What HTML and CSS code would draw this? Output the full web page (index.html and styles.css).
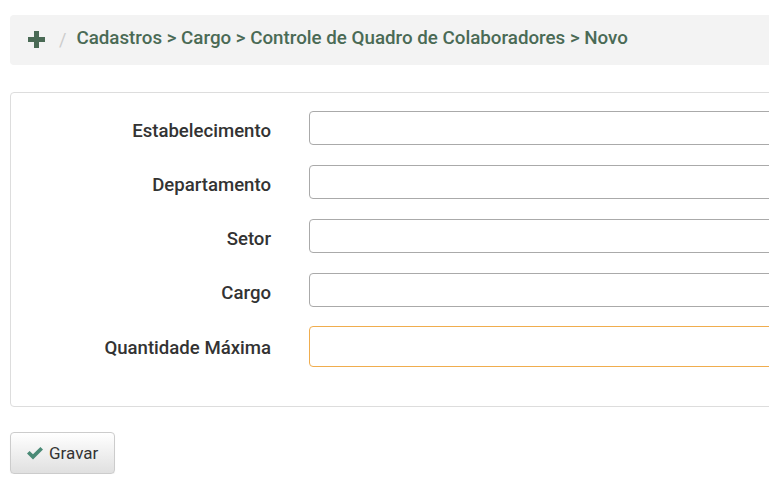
FILE: index.html
```html
<!DOCTYPE html>
<html lang="pt">
<head>
<meta charset="utf-8">
<link rel="stylesheet" href="styles.css">
</head>
<body>
<div class="page">
  <div class="breadcrumb">
    <svg class="plus" width="17" height="17" viewBox="0 0 17 17"><path d="M6 0h5v6h6v5h-6v6H6v-6H0V6h6z" fill="#4a6a55"/></svg>
    <span class="sep">/</span>
    <span class="crumb">Cadastros &gt; Cargo &gt; Controle de Quadro de Colaboradores &gt; Novo</span>
  </div>
  <div class="panel">
    <div class="row"><label class="lbl">Estabelecimento</label><div class="input"></div></div>
    <div class="row"><label class="lbl">Departamento</label><div class="input"></div></div>
    <div class="row"><label class="lbl">Setor</label><div class="input"></div></div>
    <div class="row"><label class="lbl">Cargo</label><div class="input"></div></div>
    <div class="row row-focus"><label class="lbl">Quantidade Máxima</label><div class="input focus"></div></div>
  </div>
  <button class="btn">
    <svg width="18" height="14" viewBox="0 0 18 14"><path d="M1 7.5l2.6-2.6 3.4 3.4L14.4 1 17 3.6 7 13.6z" fill="#4a8a76"/></svg>
    Gravar
  </button>
</div>
</body>
</html>
```
FILE: styles.css
```css
html, body { margin: 0; padding: 0; background: #fff; overflow: hidden; }
body { font-family: Roboto, "Noto Sans", sans-serif; color: #333; }
.page { width: 800px; padding: 15px 0 0 10px; }
.breadcrumb {
  height: 50px; background: #f3f3f3; border-radius: 4px;
  display: flex; align-items: center; padding-left: 18px; box-sizing: border-box;
}
.plus { margin-top: -2px; }
.sep { color: #ccc; margin: -2px 10px 0 14px; font-size: 18px; }
.crumb { color: #4a6a55; font-weight: 500; font-size: 18.75px; margin-top: -4px; }
.panel {
  margin-top: 27px; border: 1px solid #ddd; border-radius: 4px;
  padding: 18px 0 38px 0; height: 315px; box-sizing: border-box;
  display: flex; flex-direction: column; gap: 20px;
}
.row { display: flex; align-items: center; }
.lbl { width: 260px; text-align: right; font-weight: 500; font-size: 18.6px; color: #333; padding-top: 5px; }
.row-focus .lbl { padding-top: 1px; }
.input {
  margin-left: 38px; flex: 1; height: 34px; box-sizing: border-box;
  border: 1px solid #aaa; border-radius: 4px; background: #fff;
}
.input.focus { height: 41px; border-color: #f0ad4e; margin-top: -1px; }
.btn {
  margin-top: 25px; width: 105px; height: 42px; display: flex; align-items: center; gap: 5px;
  padding: 0 0 0 15px; font-family: Roboto, sans-serif; font-size: 17px; color: #333;
  background: linear-gradient(#fff, #e0e0e0); border: 1px solid #ccc; border-radius: 4px;
  box-shadow: 0 1px 1px rgba(0,0,0,0.05);
}
```
